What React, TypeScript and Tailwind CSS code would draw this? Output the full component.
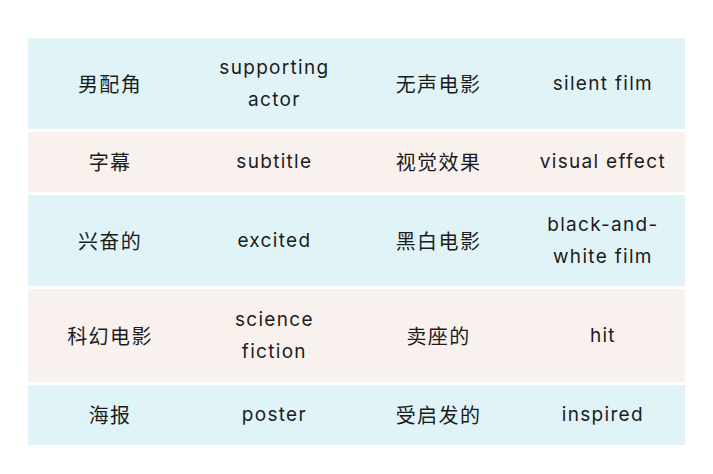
import * as React from 'react';

const rows = [
  { cells: ['男配角', 'supporting actor', '无声电影', 'silent film'], h: 'h-[91px]', bg: 'bg-[#e0f4f7]' },
  { cells: ['字幕', 'subtitle', '视觉效果', 'visual effect'], h: 'h-[60px]', bg: 'bg-[#f9f1ee]' },
  { cells: ['兴奋的', 'excited', '黑白电影', 'black-and- white film'], h: 'h-[91px]', bg: 'bg-[#e0f4f7]' },
  { cells: ['科幻电影', 'science fiction', '卖座的', 'hit'], h: 'h-[93px]', bg: 'bg-[#f9f1ee]' },
  { cells: ['海报', 'poster', '受启发的', 'inspired'], h: 'h-[60px]', bg: 'bg-[#e0f4f7]' },
];

export default function App() {
  return (
    <div className="w-[713px] h-[474px] bg-white pt-[38px] pl-[28px] text-[#1c1c1c]">
      <div className="w-[657px] flex flex-col gap-[3px]">
        {rows.map((row, i) => (
          <div key={i} className={`grid grid-cols-4 ${row.h} ${row.bg}`}>
            {row.cells.map((c, j) =>
              j % 2 === 0 ? (
                <div key={j} className="flex items-center justify-center text-center">
                  <span className="font-['Noto_Sans_CJK_SC',sans-serif] text-[20px] tracking-[1.5px]">{c}</span>
                </div>
              ) : (
                <div key={j} className="flex items-center justify-center text-center">
                  <span className="font-['Inter','Noto_Sans',sans-serif] text-[19px] leading-[32px] tracking-[1.3px] max-w-[130px]">{c}</span>
                </div>
              )
            )}
          </div>
        ))}
      </div>
    </div>
  );
}
